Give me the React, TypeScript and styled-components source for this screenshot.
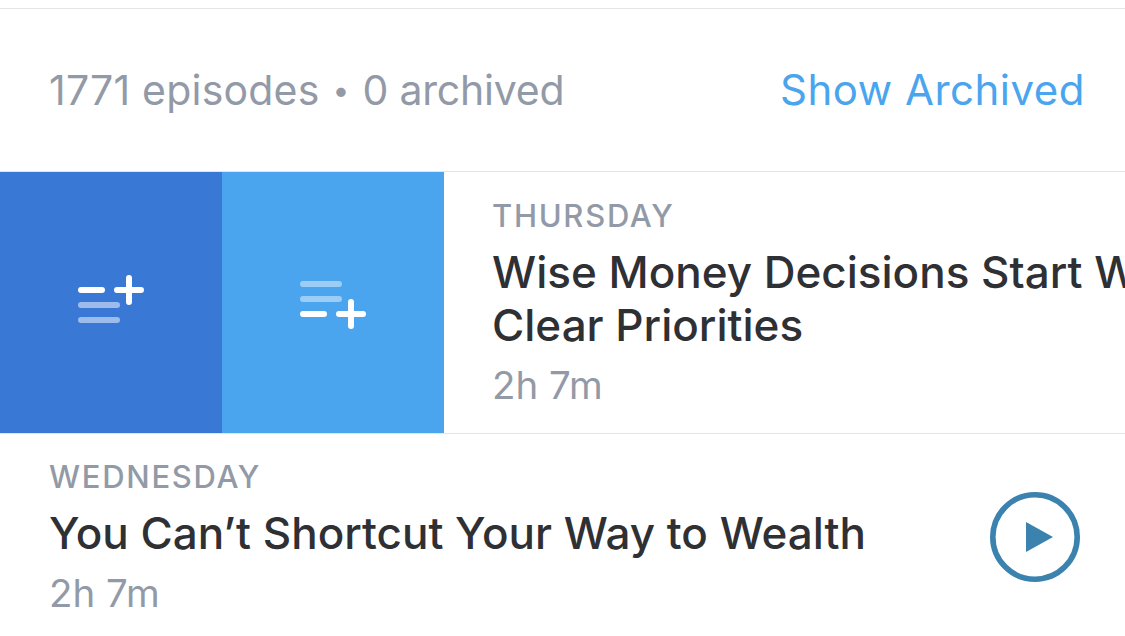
import React from "react";
import styled, { createGlobalStyle } from "styled-components";

const GlobalStyle = createGlobalStyle`
  html, body {
    margin: 0;
    padding: 0;
    background: #fff;
    overflow: hidden;
  }
  body {
    font-family: Inter, "Noto Sans", "Liberation Sans", sans-serif;
  }
`;

const Page = styled.div`
  width: 1125px;
  height: 636px;
  overflow: hidden;
  padding-top: 8px;
  box-sizing: border-box;
`;

const SummaryBar = styled.div`
  display: flex;
  justify-content: space-between;
  align-items: center;
  height: 162px;
  padding: 0 40px 0 49px;
  border-top: 1px solid #e3e4e7;
  border-bottom: 1px solid #e3e4e7;
`;

const SummaryText = styled.span`
  display: flex;
  align-items: center;
  gap: 13px;
  font-size: 41px;
  color: #939aa7;
`;

const EpisodeCount = styled.span`
  letter-spacing: 0.2px;
`;

const ArchivedCount = styled.span`
  letter-spacing: -0.2px;
`;

const Dot = styled.span`
  font-size: 30px;
`;

const ShowArchived = styled.span`
  font-size: 42px;
  line-height: 50px;
  color: #4aa5ee;
  letter-spacing: 0.5px;
`;

const SwipeRow = styled.div`
  display: flex;
  height: 261px;
  border-bottom: 1px solid #e3e4e7;
`;

const SwipeAction = styled.div<{ $bg: string }>`
  flex: 0 0 222px;
  display: flex;
  align-items: center;
  justify-content: center;
  background: ${(p) => p.$bg};
`;

const EpisodeBody = styled.div`
  flex: 0 0 1125px;
  box-sizing: border-box;
  padding: 27px 310px 0 48px;
`;

const Episode = styled.div`
  display: flex;
  justify-content: space-between;
  padding: 26px 45px 0 49px;
`;

const Day = styled.div`
  font-size: 31px;
  line-height: 34px;
  font-weight: 550;
  color: #939aa7;
  letter-spacing: 1.7px;
`;

const Title = styled.div`
  font-size: 44px;
  line-height: 53px;
  font-weight: 450;
  color: #2f3034;
  margin-top: 13px;
`;

const Duration = styled.div`
  font-size: 38.5px;
  line-height: 44px;
  color: #939aa7;
  margin-top: 11px;
`;

const PlayButton = styled.div`
  margin-top: 32px;
  line-height: 0;
`;

const QueueSvg = styled.svg<{ $shift: number }>`
  margin-top: ${(p) => p.$shift}px;
`;

const QueueNext = () => (
  <QueueSvg $shift={-7} width="66" height="48" viewBox="0 0 66 48">
    <g stroke="#fff" strokeWidth="6" strokeLinecap="round" fill="none">
      <path d="M3 15H24M39 15H63M51 3V27" />
      <path d="M3 30H39M3 45H39" opacity="0.5" />
    </g>
  </QueueSvg>
);

const QueueLast = () => (
  <QueueSvg $shift={5} width="66" height="48" viewBox="0 0 66 48">
    <g stroke="#fff" strokeWidth="6" strokeLinecap="round" fill="none">
      <path d="M3 3H39M3 18H39" opacity="0.45" />
      <path d="M3 33H24M39 33H63M51 21V45" />
    </g>
  </QueueSvg>
);

const PlayIcon = () => (
  <svg width="90" height="90" viewBox="0 0 90 90">
    <circle cx="45" cy="45" r="42.2" fill="none" stroke="#3b82ae" strokeWidth="5.6" />
    <path d="M36 30L63 45L36 60Z" fill="#3b82ae" />
  </svg>
);

export default function App() {
  return (
    <Page>
      <GlobalStyle />
      <SummaryBar>
        <SummaryText>
          <EpisodeCount>1771 episodes</EpisodeCount>
          <Dot>•</Dot>
          <ArchivedCount>0 archived</ArchivedCount>
        </SummaryText>
        <ShowArchived>Show Archived</ShowArchived>
      </SummaryBar>
      <SwipeRow>
        <SwipeAction $bg="#3a78d6">
          <QueueNext />
        </SwipeAction>
        <SwipeAction $bg="#4ba5ee">
          <QueueLast />
        </SwipeAction>
        <EpisodeBody>
          <Day>THURSDAY</Day>
          <Title>Wise Money Decisions Start With Clear Priorities</Title>
          <Duration>2h 7m</Duration>
        </EpisodeBody>
      </SwipeRow>
      <Episode>
        <div>
          <Day>WEDNESDAY</Day>
          <Title>You Can’t Shortcut Your Way to Wealth</Title>
          <Duration>2h 7m</Duration>
        </div>
        <PlayButton>
          <PlayIcon />
        </PlayButton>
      </Episode>
    </Page>
  );
}
